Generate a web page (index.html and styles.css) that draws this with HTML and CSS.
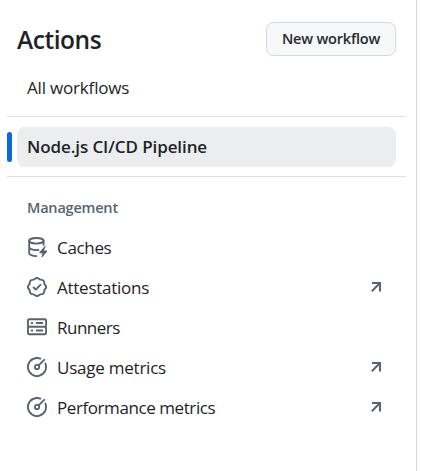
FILE: index.html
```
<!DOCTYPE html>
<html lang="en">
<head>
<meta charset="utf-8">
<title>Actions</title>
<link rel="stylesheet" href="styles.css">
</head>
<body>
<svg class="defs" aria-hidden="true">
  <symbol id="meter" viewBox="0 0 16 16"><path d="M8 1.5a6.5 6.5 0 1 0 6.016 4.035.75.75 0 0 1 1.388-.57 8 8 0 1 1-4.37-4.37.75.75 0 0 1-.569 1.389A6.479 6.479 0 0 0 8 1.5Zm6.28.22a.75.75 0 0 1 0 1.06l-4.063 4.064a2.5 2.5 0 1 1-1.06-1.06L13.22 1.72a.75.75 0 0 1 1.06 0ZM7 8a1 1 0 1 0 2 0 1 1 0 0 0-2 0Z"/></symbol>
  <symbol id="arrow" viewBox="0 0 10 10"><path d="M1 1h8v8.5M9 1 .8 9.2" fill="none" stroke="currentColor" stroke-width="2"/></symbol>
</svg>
<aside class="sidebar">
  <header class="header">
    <h1 class="title">Actions</h1>
    <button class="button"><span class="button-label">New workflow</span></button>
  </header>
  <nav>
    <a class="item all"><span class="label l-all">All workflows</span></a>
    <hr class="divider">
    <a class="item selected"><span class="label l-node">Node.js CI/CD Pipeline</span></a>
    <hr class="divider">
    <h2 class="group">Management</h2>
    <a class="item">
      <svg class="icon" viewBox="0 0 16 16"><g fill="none" stroke="currentColor" stroke-width="1.5" stroke-linecap="round"><ellipse cx="7.5" cy="3" rx="5.75" ry="2.25"/><path d="M1.75 3v9.75c0 1.3 2.4 2.5 5.75 2.5M1.75 8c0 1.3 2.4 2.5 5.75 2.5.6 0 1.1 0 1.6-.1M13.25 3v3.25"/></g><path d="M14.3 7.2 9.9 12.1a.5.5 0 0 0 .4.8h2.1l-.9 3c-.1.4.4.6.7.3l3.9-4.6a.5.5 0 0 0-.4-.8h-2.1l1.3-3.3c.2-.4-.3-.6-.6-.3Z"/></svg>
      <span class="label l-cache">Caches</span>
    </a>
    <a class="item">
      <svg class="icon" viewBox="0 0 16 16"><path d="m9.585.52.929.68c.153.112.331.186.518.215l1.138.175a2.678 2.678 0 0 1 2.24 2.24l.174 1.139c.029.187.103.365.215.518l.68.928a2.677 2.677 0 0 1 0 3.17l-.68.928a1.174 1.174 0 0 0-.215.518l-.175 1.138a2.678 2.678 0 0 1-2.241 2.241l-1.138.175a1.17 1.17 0 0 0-.518.215l-.928.68a2.677 2.677 0 0 1-3.17 0l-.928-.68a1.174 1.174 0 0 0-.518-.215L3.83 14.41a2.678 2.678 0 0 1-2.24-2.24l-.175-1.138a1.17 1.17 0 0 0-.215-.518l-.68-.928a2.677 2.677 0 0 1 0-3.17l.68-.928c.112-.153.186-.331.215-.518l.175-1.14a2.678 2.678 0 0 1 2.24-2.24l1.139-.175c.187-.029.365-.103.518-.215l.928-.68a2.677 2.677 0 0 1 3.17 0ZM7.303 1.728l-.927.68a2.67 2.67 0 0 1-1.18.489l-1.137.174a1.179 1.179 0 0 0-.987.987l-.174 1.136a2.677 2.677 0 0 1-.489 1.18l-.68.928a1.18 1.18 0 0 0 0 1.394l.68.927c.256.348.424.753.489 1.18l.174 1.137c.078.509.478.909.987.987l1.136.174a2.67 2.67 0 0 1 1.18.489l.928.68c.414.305.979.305 1.394 0l.927-.68a2.67 2.67 0 0 1 1.18-.489l1.137-.174a1.18 1.18 0 0 0 .987-.987l.174-1.136a2.67 2.67 0 0 1 .489-1.18l.68-.928a1.176 1.176 0 0 0 0-1.394l-.68-.927a2.686 2.686 0 0 1-.489-1.18l-.174-1.137a1.179 1.179 0 0 0-.987-.987l-1.136-.174a2.677 2.677 0 0 1-1.18-.489l-.928-.68a1.176 1.176 0 0 0-1.394 0ZM11.28 6.78l-3.75 3.75a.75.75 0 0 1-1.06 0L4.72 8.78a.751.751 0 0 1 .018-1.042.751.751 0 0 1 1.042-.018L7 8.94l3.22-3.22a.751.751 0 0 1 1.042.018.751.751 0 0 1 .018 1.042Z"/></svg>
      <span class="label l-att">Attestations</span>
      <svg class="arrow"><use href="#arrow"/></svg>
    </a>
    <a class="item">
      <svg class="icon" viewBox="0 0 16 16"><path d="M1.75 1h12.5c.966 0 1.75.784 1.75 1.75v4c0 .372-.116.717-.314 1 .198.283.314.628.314 1v4a1.75 1.75 0 0 1-1.75 1.75H1.75A1.75 1.75 0 0 1 0 12.75v-4c0-.358.109-.707.314-1a1.739 1.739 0 0 1-.314-1v-4C0 1.784.784 1 1.75 1ZM1.5 2.75v4c0 .138.112.25.25.25h12.5a.25.25 0 0 0 .25-.25v-4a.25.25 0 0 0-.25-.25H1.75a.25.25 0 0 0-.25.25Zm.25 5.75a.25.25 0 0 0-.25.25v4c0 .138.112.25.25.25h12.5a.25.25 0 0 0 .25-.25v-4a.25.25 0 0 0-.25-.25ZM7 4.75A.75.75 0 0 1 7.75 4h4.5a.75.75 0 0 1 0 1.5h-4.5A.75.75 0 0 1 7 4.75ZM7.75 10h4.5a.75.75 0 0 1 0 1.5h-4.5a.75.75 0 0 1 0-1.5ZM3 4.75A.75.75 0 0 1 3.75 4h.5a.75.75 0 0 1 0 1.5h-.5A.75.75 0 0 1 3 4.75ZM3.75 10h.5a.75.75 0 0 1 0 1.5h-.5a.75.75 0 0 1 0-1.5Z"/></svg>
      <span class="label l-run">Runners</span>
    </a>
    <a class="item">
      <svg class="icon"><use href="#meter"/></svg>
      <span class="label l-use">Usage metrics</span>
      <svg class="arrow"><use href="#arrow"/></svg>
    </a>
    <a class="item">
      <svg class="icon"><use href="#meter"/></svg>
      <span class="label l-perf">Performance metrics</span>
      <svg class="arrow"><use href="#arrow"/></svg>
    </a>
  </nav>
</aside>
</body>
</html>
```
FILE: styles.css
```
* { box-sizing: border-box; }
body { margin: 0; background: #fff; color: #1f2328; font-family: "Segoe UI", "Open Sans", "Noto Sans", sans-serif; overflow: hidden; }
.defs { display: none; }
.sidebar { width: 417px; height: 471px; padding: 22px 10px 0 7px; border-right: 1px solid #d1d9e0; }
.header { display: flex; justify-content: space-between; align-items: center; height: 34px; padding: 0 10px; }
.title { margin: 2px 0 0; font-size: 24.5px; line-height: 34px; font-weight: 600; letter-spacing: -0.45px; }
.button { width: 130px; height: 34px; padding: 0; border: 1px solid #d1d9e0; border-radius: 7.5px; background: #f6f8fa; color: #25292e; font: 600 14.5px/30px "Segoe UI", "Open Sans", "Noto Sans", sans-serif; letter-spacing: -0.2px; }
.item { display: flex; align-items: center; position: relative; height: 40px; margin: 0 10px; padding: 0 15px 0 10px; border-radius: 7.5px; font-size: 17px; }
.all { margin-top: 12px; }
.selected { background: #ebedef; font-weight: 600; }
.selected::before { content: ""; position: absolute; left: -10px; top: 5px; width: 5px; height: 30px; border-radius: 5px; background: #0969da; }
.divider { height: 1px; margin: 8px 0 10px; border: 0; background: #dfe1e4; }
.selected + .divider { margin: 9px 0 0; }
.group { height: 50px; margin: 0; padding: 13px 20px 0; color: #59636e; font-size: 14.5px; line-height: 36px; font-weight: 600; letter-spacing: -0.2px; }
.icon { flex: none; width: 20px; height: 20px; margin-right: 10px; color: #59636e; fill: #59636e; }
.arrow { width: 10px; height: 10px; margin-left: auto; color: #59636e; }
.label { white-space: nowrap; line-height: 24px; }
.icon + .label { padding-top: 2px; }
.l-all { letter-spacing: -0.18px; }
.l-node { letter-spacing: -0.09px; }
.l-cache { letter-spacing: -0.33px; }
.l-att { letter-spacing: -0.25px; }
.l-run { letter-spacing: -0.5px; }
.l-use { letter-spacing: -0.23px; }
.l-perf { letter-spacing: -0.42px; }
```
